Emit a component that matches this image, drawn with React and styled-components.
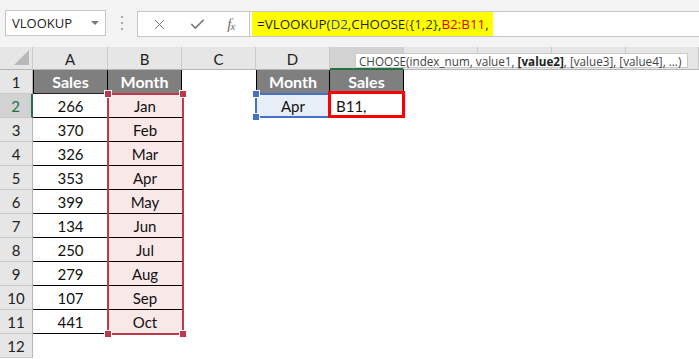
import React from "react";
import styled, { createGlobalStyle, css } from "styled-components";
import { X, Check } from "lucide-react";

const Global = createGlobalStyle`
  html, body { margin: 0; padding: 0; background: #fff; }
  * { box-sizing: border-box; }
`;

const Page = styled.div`
  width: 699px;
  height: 359px;
  overflow: hidden;
  position: relative;
  background: #fff;
  font-family: Lato, "Liberation Sans", sans-serif;
`;

const Toolbar = styled.div`
  height: 47px;
  background: #f3f3f3;
  display: flex;
  align-items: flex-start;
  padding: 10px 0 0 5px;
`;

const NameBox = styled.div`
  width: 101px;
  height: 26px;
  background: #fff;
  border: 1px solid #c6c6c6;
  display: flex;
  align-items: center;
  justify-content: space-between;
  padding: 0 6px 0 6px;
  font-family: "Open Sans", "Noto Sans", sans-serif;
  font-size: 13px;
  color: #222;
`;

const Caret = styled.span`
  width: 0;
  height: 0;
  border-left: 4px solid transparent;
  border-right: 4px solid transparent;
  border-top: 4px solid #7a7a7a;
`;

const Dots = styled.div`
  width: 31px;
  height: 26px;
  display: flex;
  flex-direction: column;
  align-items: center;
  justify-content: center;
  gap: 4px;
  span {
    width: 2px;
    height: 2px;
    background: #a8a8a8;
  }
`;

const FormulaBar = styled.div`
  flex: 1;
  height: 26px;
  margin-top: 1px;
  background: #fff;
  border: 1px solid #c6c6c6;
  border-right: none;
  display: flex;
  align-items: stretch;
`;

const Buttons = styled.div`
  width: 112px;
  display: flex;
  align-items: center;
  justify-content: space-around;
  padding: 0 4px 0 2px;
  color: #7a7a7a;
  border-right: 1px solid #c6c6c6;
`;

const Fx = styled.span`
  font-family: "Liberation Serif", serif;
  font-style: italic;
  font-size: 15px;
  color: #6e6e6e;
  letter-spacing: -1px;
  sub { font-size: 11px; vertical-align: -1px; }
`;

const Formula = styled.div`
  margin: 0 0 0 2px;
  background: #ffff00;
  padding: 0 4px 0 5px;
  display: flex;
  align-items: center;
  font-family: "Open Sans", "Noto Sans", sans-serif;
  font-size: 13.4px;
  color: #1f1f1f;
  white-space: pre;
`;

const Tok = styled.span`
  color: ${(p) => p.$c || "#1f1f1f"};
`;

const Sheet = styled.div`
  position: relative;
  display: grid;
  grid-template-columns: 33px 75px 74px 74px 74px 74px 74px 74px 74px 73px;
  grid-template-rows: 23px repeat(12, 24px);
`;

const Corner = styled.div`
  background: #e6e6e6;
  border-right: 1px solid #c9c9c9;
  border-bottom: 1px solid #b5b5b5;
  position: relative;
  &::after {
    content: "";
    position: absolute;
    right: 3px;
    bottom: 4px;
    width: 0;
    height: 0;
    border-left: 15px solid transparent;
    border-bottom: 15px solid #b9b9b9;
  }
`;

const ColHead = styled.div`
  background: ${(p) => (p.$sel ? "#d2d2d2" : "#e6e6e6")};
  border-right: 1px solid #c9c9c9;
  border-bottom: ${(p) => (p.$sel ? "2px solid #217346" : "1px solid #b5b5b5")};
  display: flex;
  align-items: center;
  justify-content: center;
  font-size: 15px;
  color: #222;
  padding-top: 1px;
`;

const RowHead = styled.div`
  background: ${(p) => (p.$sel ? "#d2d2d2" : "#e6e6e6")};
  border-right: ${(p) => (p.$sel ? "2px solid #217346" : "1px solid #b5b5b5")};
  border-bottom: 1px solid #c9c9c9;
  display: flex;
  align-items: center;
  justify-content: center;
  font-size: 15px;
  color: ${(p) => (p.$sel ? "#217346" : "#222")};
`;

const kinds = {
  head: css`
    background: #7f7f7f;
    color: #fff;
    font-weight: 700;
    font-size: 16px;
    border-right: 1px solid #000;
    border-bottom: 1px solid #222;
    justify-content: center;
  `,
  num: css`
    border-bottom: 1px solid #000;
    justify-content: center;
  `,
  month: css`
    background: #f9e8e8;
    border-bottom: 1px solid #000;
    justify-content: center;
  `,
  lookup: css`
    background: #e8eef8;
    justify-content: center;
  `,
  active: css`
    justify-content: flex-start;
    padding-left: 6px;
  `,
  empty: css``,
};

const Cell = styled.div`
  display: flex;
  align-items: center;
  font-size: 15px;
  color: #111;
  ${(p) => p.$left && "border-left: 1px solid #000;"}
  ${(p) => kinds[p.$kind || "empty"]}
`;

const Range = styled.div`
  position: absolute;
  pointer-events: none;
  border: ${(p) => p.$w}px solid ${(p) => p.$c};
`;

const Handle = styled.span`
  position: absolute;
  width: 6px;
  height: 6px;
  background: ${(p) => p.$c};
  outline: 1px solid #fff;
`;

const Tooltip = styled.div`
  position: absolute;
  left: 355px;
  top: 53px;
  height: 15px;
  padding: 0 6px 0 3px;
  background: #fff;
  border: 1px solid #c9c9c9;
  display: flex;
  align-items: center;
  font-family: "Open Sans", "Noto Sans", sans-serif;
  font-size: 11.7px;
  color: #444;
  white-space: pre;
  b { color: #222; }
`;

const sales = [266, 370, 326, 353, 399, 134, 250, 279, 107, 441];
const months = ["Jan", "Feb", "Mar", "Apr", "May", "Jun", "Jul", "Aug", "Sep", "Oct"];
// E..I letters lie under the function tooltip and are not visible
const cols = ["A", "B", "C", "D", "", "", "", "", ""];

function cellFor(r, c) {
  if (r === 1) {
    if (c === 0) return { kind: "head", text: "Sales", left: true };
    if (c === 1) return { kind: "head", text: "Month" };
    if (c === 3) return { kind: "head", text: "Month", left: true };
    if (c === 4) return { kind: "head", text: "Sales" };
  }
  if (r >= 2 && r <= 11) {
    if (c === 0) return { kind: "num", text: String(sales[r - 2]) };
    if (c === 1) return { kind: "month", text: months[r - 2] };
  }
  if (r === 2 && c === 3) return { kind: "lookup", text: "Apr" };
  if (r === 2 && c === 4) return { kind: "active", text: "B11," };
  return { kind: "empty", text: "" };
}

export default function App() {
  const rows = [];
  for (let r = 1; r <= 12; r++) {
    rows.push(
      <RowHead key={`rh${r}`} $sel={r === 2}>
        {r}
      </RowHead>
    );
    cols.forEach((_, c) => {
      const d = cellFor(r, c);
      rows.push(
        <Cell key={`c${r}-${c}`} $kind={d.kind} $left={d.left}>
          {d.text}
        </Cell>
      );
    });
  }

  return (
    <Page>
      <Global />
      <Toolbar>
        <NameBox>
          VLOOKUP
          <Caret />
        </NameBox>
        <Dots>
          <span />
          <span />
          <span />
        </Dots>
        <FormulaBar>
          <Buttons>
            <X size={17} strokeWidth={1.4} />
            <Check size={17} strokeWidth={2.4} />
            <Fx>
              f<sub>x</sub>
            </Fx>
          </Buttons>
          <Formula>
            <Tok>=VLOOKUP(</Tok>
            <Tok $c="#2f5597">D2</Tok>
            <Tok>,CHOOSE</Tok>
            <Tok $c="#c55a11">(</Tok>
            <Tok $c="#3b3b00">{"{1,2}"}</Tok>
            <Tok>,</Tok>
            <Tok $c="#e00000">B2:B11</Tok>
            <Tok>,</Tok>
          </Formula>
        </FormulaBar>
      </Toolbar>
      <Sheet>
        <Corner />
        {cols.map((l, i) => (
          <ColHead key={`h${i}`} $sel={i === 4}>
            {l}
          </ColHead>
        ))}
        {rows}
        <Range $w={2} $c="#c0394b" style={{ left: 107, top: 46, width: 77, height: 242 }}>
          <Handle $c="#c0394b" style={{ left: -4, top: -4 }} />
          <Handle $c="#c0394b" style={{ right: -4, top: -4 }} />
          <Handle $c="#c0394b" style={{ left: -4, bottom: -4 }} />
          <Handle $c="#c0394b" style={{ right: -4, bottom: -4 }} />
        </Range>
        <Range $w={2} $c="#4472c4" style={{ left: 255, top: 46, width: 76, height: 25 }}>
          <Handle $c="#4472c4" style={{ left: -4, top: -4 }} />
          <Handle $c="#4472c4" style={{ left: -4, bottom: -4 }} />
        </Range>
        <Range $w={3} $c="#ff0000" style={{ left: 328, top: 44, width: 77, height: 27 }} />
      </Sheet>
      <Tooltip>
        CHOOSE(index_num, value1, <b>[value2]</b>, [value3], [value4], ...)
      </Tooltip>
    </Page>
  );
}
